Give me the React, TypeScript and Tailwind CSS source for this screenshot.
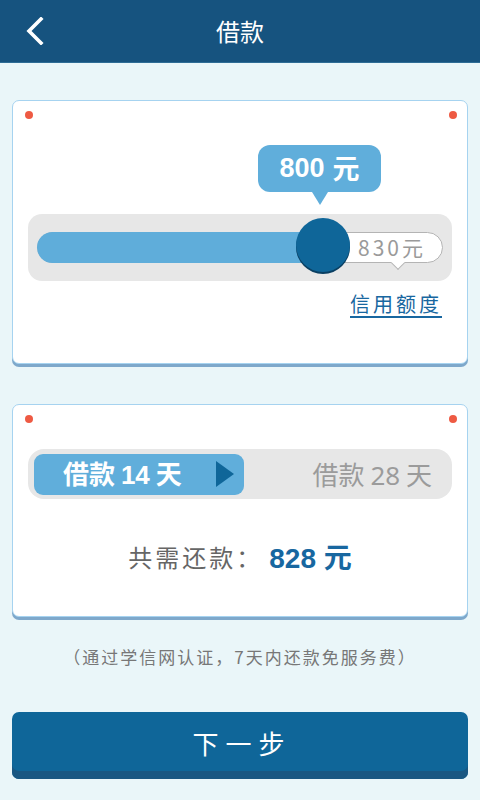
import React from 'react';

const cjk = { fontFamily: '"Noto Sans CJK SC", "Noto Sans", sans-serif' };
const num = { fontFamily: '"Liberation Sans", "Noto Sans CJK SC", sans-serif' };

const Dots: React.FC = () => (
    <>
        <span className="absolute left-[12px] top-[10px] w-[8px] h-[8px] rounded-full bg-[#ee5a43]"></span>
        <span className="absolute right-[10px] top-[10px] w-[8px] h-[8px] rounded-full bg-[#ee5a43]"></span>
    </>
);

const App: React.FC = () => {
    const limit = 830;
    const amount = 800;
    // fill ends under the knob centre
    const knobCenter = 285;

    return (
        <div className="w-[480px] min-h-[800px] bg-[#eaf6f9] flex flex-col" style={cjk}>
            {/* Header */}
            <div className="h-[63px] bg-[#16537f] flex items-center relative border-b border-[#2e6d96]">
                <svg className="absolute left-[25px] top-[17px]" width="20" height="28" viewBox="0 0 20 28" fill="none">
                    <path d="M16 2 L4 14 L16 26" stroke="white" strokeWidth="3.6" strokeLinecap="square" />
                </svg>
                <h1 className="w-full text-center text-white text-[24px] leading-none">借款</h1>
            </div>

            <div className="px-[12px] pt-[37px] flex flex-col">
                {/* Amount card */}
                <div className="relative bg-white border border-[#a6d3f0] rounded-[7px] shadow-[0_3px_0_#7ea8cb] pt-[44px] pb-[45px]">
                    <Dots />
                    <div className="ml-[245px] w-[123px] flex flex-col items-center">
                        <div className="w-full h-[47px] rounded-[12px] bg-[#60aedb] flex items-center justify-center text-white text-[27px] font-bold" style={num}>
                            {amount}
                            <span className="ml-[8px]" style={cjk}>元</span>
                        </div>
                        <div className="w-0 h-0 border-l-[8px] border-r-[8px] border-t-[13px] border-l-transparent border-r-transparent border-t-[#60aedb]"></div>
                    </div>

                    <div className="mx-[15px] mt-[9px] h-[67px] bg-[#e7e7e7] rounded-[14px] px-[9px] py-[18px]">
                        <div className="relative h-[31px] bg-white border border-[#b4b4b4] rounded-full">
                            <div className="absolute -left-px -top-px -bottom-px bg-[#5fadda] rounded-l-full" style={{ width: knobCenter }}></div>
                            <span className="absolute right-[16px] top-0 h-full flex items-center text-[21px] text-[#9a9a9a] tracking-[3px]">
                                {limit}元
                            </span>
                            <span className="absolute left-[355px] -bottom-[6px] w-[10px] h-[10px] bg-white border-r border-b border-[#b4b4b4] rotate-45"></span>
                            <span className="absolute left-[258px] -top-[15px] w-[54px] h-[54px] rounded-full bg-[#0f6699] shadow-[0_2px_0_#0a3f62]"></span>
                        </div>
                    </div>

                    <div className="flex justify-end pr-[25px] mt-[11px]">
                        <span className="text-[20px] leading-[24px] text-[#1867a0] tracking-[3px] border-b-2 border-[#1867a0]">信用额度</span>
                    </div>
                </div>

                {/* Term card */}
                <div className="relative mt-[40px] bg-white border border-[#a6d3f0] rounded-[7px] shadow-[0_3px_0_#7ea8cb] pt-[44px] pb-[42px]">
                    <Dots />
                    <div className="mx-[15px] h-[50px] bg-[#e7e7e7] rounded-[16px] px-[6px] py-[5px] flex items-center">
                        <div className="w-[210px] h-[41px] bg-[#60aedb] rounded-[9px] flex items-center pl-[29px] pr-[10px]">
                            <span className="text-white text-[26px] font-bold leading-none">
                                借款 <span style={num}>14</span> 天
                            </span>
                            <svg className="ml-auto" width="18" height="26" viewBox="0 0 18 26">
                                <path d="M0 0 L18 13 L0 26 Z" fill="#0f6699" />
                            </svg>
                        </div>
                        <span className="ml-auto mr-[14px] text-[26px] text-[#9b9b9b] leading-none">
                            借款 <span style={{ fontFamily: '"Noto Sans", sans-serif' }}>28</span> 天
                        </span>
                    </div>

                    <div className="mt-[41px] flex items-center justify-center h-[34px]">
                        <span className="text-[24px] text-[#666] tracking-[3px]">共需还款：</span>
                        <span className="text-[28px] font-bold text-[#1867a0] ml-[6px]" style={num}>
                            828 <span style={cjk}>元</span>
                        </span>
                    </div>
                </div>

                <p className="mt-[27px] text-center text-[17px] text-[#777] tracking-[2px]">（通过学信网认证，7天内还款免服务费）</p>

                <button className="mt-[42px] h-[67px] w-full rounded-[7px] bg-[#0f6699] shadow-[inset_0_-8px_0_#1a5782] text-white text-[26px] tracking-[7px] pl-[4px] pb-[6px]">
                    下一步
                </button>
            </div>
        </div>
    );
};

export default App;
